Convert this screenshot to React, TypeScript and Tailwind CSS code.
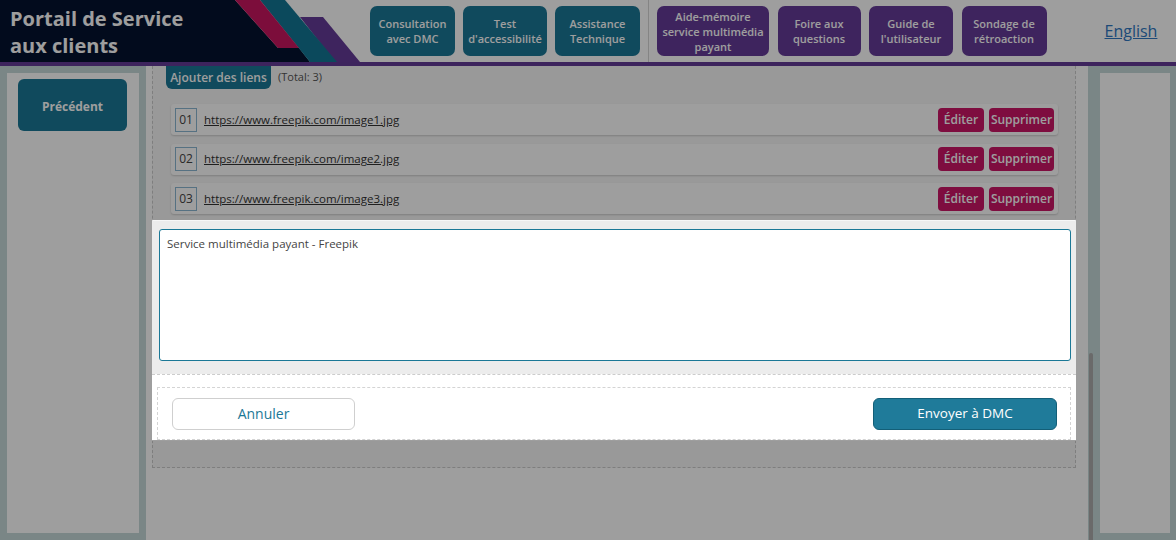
import React from "react";

const teal = "bg-[#1b7896]";

function NavBtn({ lines, purple, w }: { lines: string[]; purple?: boolean; w: string }) {
  return (
    <div
      className={`${w} h-[50px] rounded-[7px] flex flex-col items-center justify-center text-white text-[11px] font-semibold leading-[15px] text-center ${
        purple ? "bg-[#653b98]" : teal
      }`}
    >
      {lines.map((l) => (
        <span key={l} className="whitespace-nowrap">{l}</span>
      ))}
    </div>
  );
}

function Row({ n, url }: { n: string; url: string }) {
  return (
    <div className="h-[31px] bg-white rounded-[3px] shadow-[0_1px_2px_rgba(0,0,0,0.18)] flex items-center pl-[4px] pr-[4px]">
      <div className="w-[22px] h-[24px] border border-[#8cb7d2] flex items-center justify-center text-[12px] text-[#444]">
        {n}
      </div>
      <span className="ml-[7px] text-[11.5px] text-[#333] underline">{url}</span>
      <div className="ml-auto flex gap-[5px]">
        <button className="w-[46px] h-[24px] rounded-[4px] bg-[#cb1566] text-white text-[12px] font-semibold">Éditer</button>
        <button className="w-[65px] h-[24px] rounded-[4px] bg-[#cb1566] text-white text-[12px] font-semibold">Supprimer</button>
      </div>
    </div>
  );
}

export default function App() {
  return (
    <div className="w-[1176px] h-[540px] overflow-hidden bg-[#c5d8d8] font-['Open_Sans',sans-serif] flex flex-col">
      {/* Header */}
      <header className="h-[66px] bg-white border-b-4 border-[#633a96] flex items-stretch shrink-0">
        <div className="relative w-[362px] h-[62px]">
          <svg className="absolute left-0 top-0" width="370" height="62" viewBox="0 0 370 62">
            <polygon points="0,0 235,0 278,48 299,48 310,62 0,62" fill="#04132f" />
            <polygon points="300,17 323,17 360,62 335,62" fill="#653b98" />
            <polygon points="260,0 285,0 337,62 310,62" fill="#137795" />
            <polygon points="235,0 260,0 299,48 278,48" fill="#c9165f" />
          </svg>
          <div className="relative pl-[10px] pt-[5px] text-white font-bold text-[20px] leading-[27px]">
            <div>Portail de Service</div>
            <div>aux clients</div>
          </div>
        </div>
        <nav className="flex items-center ml-[8px]">
          <div className="flex gap-[8px]">
            <NavBtn w="w-[85px]" lines={["Consultation", "avec DMC"]} />
            <NavBtn w="w-[84px]" lines={["Test", "d'accessibilité"]} />
            <NavBtn w="w-[85px]" lines={["Assistance", "Technique"]} />
          </div>
          <div className="w-px self-stretch bg-[#d6d6d6] mx-[8px]" />
          <div className="flex gap-[8.5px]">
            <NavBtn purple w="w-[112px]" lines={["Aide-mémoire", "service multimédia", "payant"]} />
            <NavBtn purple w="w-[83px]" lines={["Foire aux", "questions"]} />
            <NavBtn purple w="w-[84px]" lines={["Guide de", "l'utilisateur"]} />
            <NavBtn purple w="w-[85px]" lines={["Sondage de", "rétroaction"]} />
          </div>
          <a className="ml-[58px] text-[16px] text-[#2f78c2] underline">English</a>
        </nav>
      </header>

      {/* Body */}
      <div className="flex flex-1 pl-[7px] pr-[6px] min-h-0">
        <aside className="w-[132px] mt-[7px] mb-[7px] bg-white pt-[6px] pl-[11px]">
          <button className={`w-[109px] h-[52px] pt-[3px] rounded-[6px] ${teal} text-white text-[12px] font-bold`}>Précédent</button>
        </aside>

        <main className="ml-[7px] w-[942px] bg-white px-[6px] overflow-hidden">
          <div className="w-[924px] bg-[#f7f7f7] border border-dashed border-t-0 border-[#cccccc] pb-[26px]">
            <div className="flex items-center pl-[13px]">
              <button className={`w-[105px] h-[23px] rounded-b-[6px] ${teal} text-white text-[12px] font-semibold`}>
                Ajouter des liens
              </button>
              <span className="ml-[7px] text-[11px] text-[#555]">(Total: 3)</span>
            </div>
            <div className="ml-[18px] w-[887px] mt-[15px] flex flex-col gap-[8.5px]">
              <Row n="01" url="https://www.freepik.com/image1.jpg" />
              <Row n="02" url="https://www.freepik.com/image2.jpg" />
              <Row n="03" url="https://www.freepik.com/image3.jpg" />
            </div>
            <section className="mt-[7px] -mx-px">
              <div className="bg-[#ececec] pt-[8px] pl-[7px] pr-[5px] pb-[13px]">
                <div className="h-[132px] bg-white border border-[#1b7896] rounded-[3px] px-[7px] pt-[5px] text-[11.5px] text-[#444]">
                  Service multimédia payant - Freepik
                </div>
              </div>
              <div className="bg-white border-t border-dashed border-[#cccccc] pt-[12px] px-[5px] pb-px">
                <div className="h-[53px] border border-dashed border-[#d4d4d4] flex items-center justify-between pl-[14px] pr-[13px]">
                  <button className="w-[183px] h-[32px] rounded-[6px] bg-white border border-[#cfcfcf] text-[14px] text-[#1b7896]">
                    Annuler
                  </button>
                  <button className="w-[184px] h-[32px] rounded-[6px] bg-[#1f7b9a] border border-[#135f78] text-[13.5px] font-medium text-white">
                    Envoyer à DMC
                  </button>
                </div>
              </div>
            </section>
          </div>
        </main>

        <div className="w-[12px] flex flex-col">
          <div className="h-[287px]" />
          <div className="flex-1 w-[4px] ml-[1px] bg-[#ababab] rounded-t-[2px]" />
        </div>

        <aside className="w-[70px] mt-[7px] mb-[7px] bg-white" />
      </div>

      {/* Spotlight overlay */}
      <div className="fixed left-[152px] top-[220px] w-[924px] h-[220px] pointer-events-none shadow-[0_0_0_9999px_rgba(0,0,0,0.38)]" />
    </div>
  );
}
